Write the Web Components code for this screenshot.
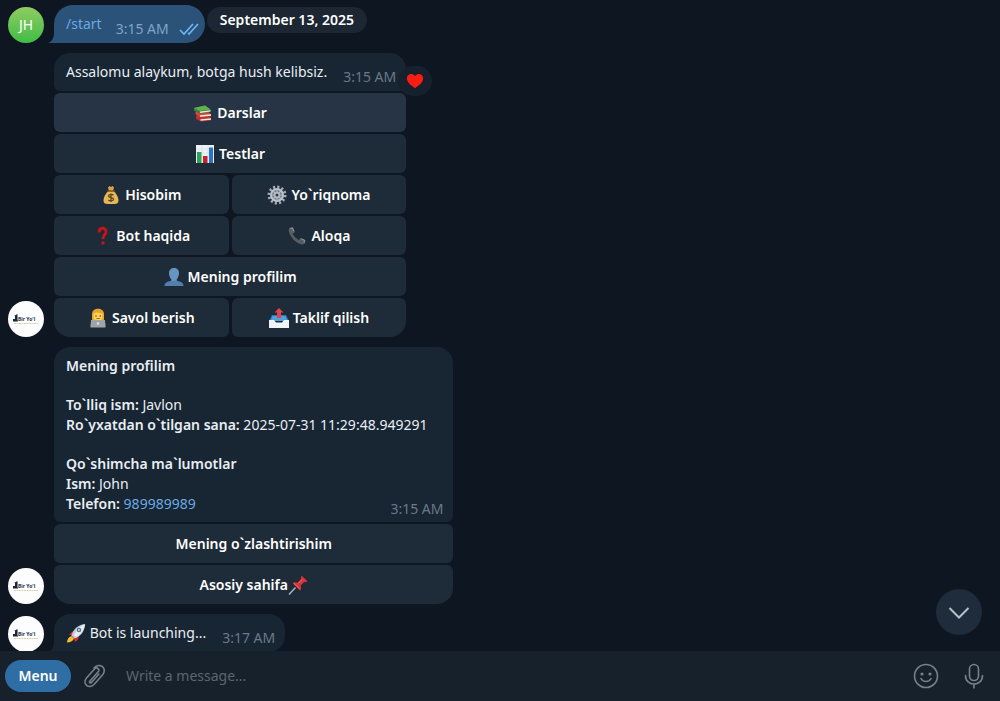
<!DOCTYPE html>
<html lang="uz">
<head>
<meta charset="utf-8">
<meta name="viewport" content="width=device-width, initial-scale=1">
<title>Bir Yo'l</title>
<style>
    html, body {
        height: 100%;
        margin: 0;
    }
    body {
        background: #0e1621;
        color: #e9eef3;
        font: 14px/20px "Noto Sans", "Open Sans", sans-serif;
        --bubble: #182533;
        --key: #1e2b38;
        --muted: #6b7987;
        --radius: 16px;
    }
    b { font-weight: 600; }
    a { color: #6aaae4; text-decoration: none; }
</style>
</head>
<body>
<chat-app>
    <chat-message>
        <user-avatar slot="avatar" name="JH"></user-avatar>
        <chat-bubble out tail time="3:15 AM"><a href="#start">/start</a></chat-bubble>
        <date-pill>September 13, 2025</date-pill>
    </chat-message>

    <chat-message>
        <user-avatar slot="avatar"></user-avatar>
        <key-board>
            <chat-bubble slot="bubble" keys time="3:15 AM">Assalomu alaykum, botga hush kelibsiz.<reaction-badge slot="reaction"></reaction-badge></chat-bubble>
            <key-button wide active icon="books">Darslar</key-button>
            <key-button wide icon="chart">Testlar</key-button>
            <key-button icon="money">Hisobim</key-button>
            <key-button icon="gear">Yo`riqnoma</key-button>
            <key-button icon="question">Bot haqida</key-button>
            <key-button icon="phone">Aloqa</key-button>
            <key-button wide icon="person">Mening profilim</key-button>
            <key-button first icon="worker">Savol berish</key-button>
            <key-button last icon="outbox">Taklif qilish</key-button>
        </key-board>
    </chat-message>

    <chat-message>
        <user-avatar slot="avatar"></user-avatar>
        <key-board>
            <chat-bubble slot="bubble" keys long time="3:15 AM">
                <text-group><b>Mening profilim</b></text-group>
                <text-group><b>To`lliq ism:</b> Javlon<br><b>Ro`yxatdan o`tilgan sana:</b> 2025-07-31 11:29:48.949291</text-group>
                <text-group><b>Qo`shimcha ma`lumotlar</b><br><b>Ism:</b> John<br><b>Telefon:</b> <a href="tel:989989989">989989989</a></text-group>
            </chat-bubble>
            <key-button wide>Mening o`zlashtirishim</key-button>
            <key-button wide first last after icon="pin">Asosiy sahifa</key-button>
        </key-board>
    </chat-message>

    <chat-message>
        <user-avatar slot="avatar"></user-avatar>
        <chat-bubble tail time="3:17 AM"><emoji-icon name="rocket"></emoji-icon> Bot is launching...</chat-bubble>
    </chat-message>

    <scroll-button slot="scroll"></scroll-button>
    <message-composer slot="composer"></message-composer>
</chat-app>

<script>
// 20x20 drawings
const emojis = {
    books: `
        <path d="m3 13 11-1 4 3v2.500L8 18.500 3 16z" fill="#b8322f"/>
        <path d="m7.500 16.200 10.500-1v1.600l-10.500 1z" fill="#f1e9dd"/>
        <path d="m2.500 8.500 11-.5 4.500 3v2.500L7 14.500l-4.500-3z" fill="#d2453c"/>
        <path d="m7 12.200 11-1v1.500L7 13.700z" fill="#f5eee2"/>
        <path d="M1 5 12 2.500l5.500 4V9L7 10.500 1 7.500z" fill="#35843a"/>
        <path d="M1 5 12 2.500l5.500 4L7 8z" fill="#62b04f"/>
        <path d="m7 8.600 10.500-1.400v1.300L7 9.900z" fill="#ece8d4"/>`,
    chart: `
        <path d="M1 1h18v18H1z" fill="#eef2f6"/>
        <path d="M1 5h18M1 9h18M1 13h18M7 1v18M13 1v18" stroke="#cdd8e2" stroke-width=".6"/>
        <path d="M2 8h4.500v11H2z" fill="#2aa653"/>
        <path d="M8 12h4.500v7H8z" fill="#c5202c"/>
        <path d="M14 3.500h4V19h-4z" fill="#2875c9"/>`,
    money: `
        <path d="M7 2.500 8.500 1l1.500 1 1.500-1L13 2.500 12 6H8z" fill="#d9a646"/>
        <path d="M7.500 6h5c2.500 2 5 6 5 9.500 0 2.500-1.500 3.500-4 3.500h-7c-2.500 0-4-1-4-3.500C2.500 12 5 8 7.500 6z" fill="#e3b75a"/>
        <path d="M7 6h6" stroke="#7e4e20" stroke-width="1.600" stroke-linecap="round"/>
        <path d="M12.500 10.200c-1-1-5-1.200-5 .8 0 2.200 5 1 5 3.200 0 2-4 2-5.200.6M10 8.500v8.500" fill="none" stroke="#5e451d" stroke-width="1.300"/>`,
    gear: `
        <circle cx="10" cy="10" r="8" fill="none" stroke="#a6aeb8" stroke-width="3" stroke-dasharray="2.100 2.088"/>
        <circle cx="10" cy="10" r="6" fill="#78828e" stroke="#bdc4cc" stroke-width="2"/>
        <path d="M10 4v12M4 10h12M6 6l8 8M14 6l-8 8" stroke="#aeb6bf" stroke-width="1.200"/>
        <circle cx="10" cy="10" r="3" fill="#b9c0c8"/>
        <circle cx="10" cy="10" r="1.500" fill="#303b47"/>`,
    question: `
        <path d="M7 6.500c0-5.500 7-5.500 7-1 0 3.500-3 3.500-3 7.500" fill="none" stroke="#c9141b" stroke-width="2.800"/>
        <circle cx="11" cy="17" r="1.700" fill="#c9141b"/>`,
    phone: `
        <path d="M3 1.500 6 1l2 5-2.200 1.800c1.200 2.700 3.200 4.800 6 6.200l2-2.200 4.700 2.200-.5 3.500c-2 2-6 1-10-2.500S-.5 4 3 1.500z" fill="#555c64"/>
        <path d="m3.500 2.500 2-.5 1.200 3.300M14.500 13l3 1.400-.4 2" fill="none" stroke="#939aa1"/>`,
    person: `
        <path d="M.5 19c0-3 2.500-4.500 6-5l1-1.500h5l1 1.500c3.500.5 6 2 6 5z" fill="#527fae"/>
        <path d="M5 6c0-3 2-5 5-5s5 2 5 5-2 8-5 8-5-5-5-8z" fill="#6795c2"/>`,
    worker: `
        <path d="M4 13V6c0-7 12-7 12 0v7z" fill="#e9a523"/>
        <path d="M5.500 6 8 4.500l6.500 1V9c0 5-9 5-9 0z" fill="#ffd35c"/>
        <circle cx="8" cy="8" r=".8" fill="#61421e"/><circle cx="12.300" cy="8" r=".8" fill="#61421e"/>
        <path d="M8.500 10.500h3.300" stroke="#9a6023"/>
        <path d="M2.500 19v-3c0-2 2-3 4-3h7c2 0 4 1 4 3v3z" fill="#4b7196"/>
        <path d="M3 12h14l.5 7.500h-15z" fill="#a0a3a7"/>
        <circle cx="10" cy="15.500" r="1.200" fill="#dddfe1"/>`,
    outbox: `
        <path d="M3 7h14l3 6H0z" fill="#2b79b9"/>
        <path d="M3.500 8h13l2 5h-17z" fill="#4f9fd8"/>
        <path d="M0 12h5l2 2.500h6l2-2.500h5v8H0z" fill="#eef3f7"/>
        <path d="M10 0 5.500 4.500H8V10h4V4.500h2.500z" fill="#e4424a"/>`,
    pin: `
        <path d="m7.500 12.500-6.500 7" stroke="#a9b6bf" stroke-width="1.500"/>
        <path d="M4.500 8c2-1.200 4-.8 5.200-.2L13 4c-.3-1 0-2.200.8-3.200l5.700 5.500c-1 .8-2.200 1-3.200.7L12.500 10.500c.8 1.500 1 3.500-.3 5.300z" fill="#d73338"/>
        <path d="m10 8.500 4-4M6 8.500l5.500 5" stroke="#f36e6c"/>`,
    rocket: `
        <path d="M3 12c3-4 5-4 7-4l3 4c0 3-1 5-4 7l-1-4-3-3z" fill="#d82d32"/>
        <path d="M5.500 13 8 15.500C7 18 4 19.500 1 19.500c.2-3 1.500-5.500 4.500-6.500z" fill="#f5bd2c"/>
        <path d="M5.500 12.500C7 7 11 2 19 1c0 7-4 12-10.500 14.500z" fill="#c3ced8"/>
        <path d="M8 12.500C10 8 13 4 19 1c-1 6-4.500 10-8.500 13z" fill="#e9eef3"/>
        <circle cx="13" cy="7" r="2.200" fill="#4e6b87"/><circle cx="13" cy="7" r="1.200" fill="#9fc3df"/>`,
    heart: `
        <path d="M10 18C4 14 1 11 1 7c0-5 6-6.500 9-2.500C13 .5 19 2 19 7c0 4-3 7-9 11z" fill="#fb1d12"/>`
};

class BaseElement extends HTMLElement {
    constructor() {
        super();
        this.attachShadow({ mode: "open" });
        this.shadowRoot.innerHTML = this.render();
    }
}

class EmojiIcon extends BaseElement {
    render() {
        return `
<style>
    :host { display: inline-block; width: 20px; height: 20px; vertical-align: bottom; }
    svg { display: block; width: 100%; height: 100%; }
</style>
<svg viewBox="0 0 20 20" aria-hidden="true">${emojis[this.getAttribute("name")]}</svg>`;
    }
}

class ChatApp extends BaseElement {
    render() {
        return `
<style>
    :host {
        display: grid;
        grid-template-rows: minmax(0, 1fr) auto;
        height: 100vh;
        overflow: hidden;
    }
    main {
        position: relative;
        min-height: 0;
        overflow: hidden;
    }
    .list {
        display: flex;
        flex-direction: column;
        gap: 10px;
        padding: 5px 8px 0;
    }
    .scroll {
        position: absolute;
        right: 18px;
        bottom: 16px;
    }
</style>
<main>
    <div class="list"><slot></slot></div>
    <div class="scroll"><slot name="scroll"></slot></div>
</main>
<slot name="composer"></slot>`;
    }
}

class ChatMessage extends BaseElement {
    render() {
        return `
<style>
    :host { display: flex; align-items: flex-end; gap: 10px; }
    .body { display: flex; align-items: flex-start; gap: 2px; min-width: 0; }
</style>
<slot name="avatar"></slot>
<div class="body"><slot></slot></div>`;
    }
}

class UserAvatar extends BaseElement {
    render() {
        const name = this.getAttribute("name");
        const logo = `
<svg viewBox="0 0 26 12" aria-hidden="true">
    <path d="M4.500 1v7H0V6h2V3H1z" fill="#17263f"/>
    <path d="M0 8h5" stroke="#17263f"/>
    <text x="5" y="8">Bir Yo'l</text>
    <path d="M1 10.500h24" stroke="#c9c6a2" stroke-width=".8" stroke-dasharray="2 .5"/>
</svg>`;
        return `
<style>
    :host {
        display: grid;
        place-items: center;
        flex: none;
        width: 36px;
        height: 36px;
        border-radius: 50%;
        background: #fdfdfd;
    }
    :host([name]) { background: linear-gradient(#90cc63, #3fbd45); color: #fff; }
    svg { width: 26px; height: 12px; }
    text { font: 700 5px "Noto Sans", sans-serif; fill: #23334d; }
</style>
${name ? `<span>${name}</span>` : logo}`;
    }
}

class ChatBubble extends BaseElement {
    render() {
        const checks = `
<svg width="20" height="14" viewBox="0 0 20 14" aria-label="Read">
    <path d="m1 8 4 4L14 2M9 11l1 1 9-10" fill="none" stroke="#6fb6f5" stroke-width="1.600"/>
</svg>`;
        return `
<style>
    :host {
        position: relative;
        display: flex;
        gap: 16px;
        box-sizing: border-box;
        min-height: 38px;
        padding: 9px 10px 9px 12px;
        border-radius: var(--radius);
        background: var(--bubble);
    }
    :host([out]) { --bubble: #2b5278; --muted: #7ea5cb; gap: 14px; padding-right: 6px; border-radius: 19px; }
    :host([tail]) { border-bottom-left-radius: 0; }
    :host([keys]) { border-radius: var(--radius) var(--radius) 6px 6px; }
    :host([long]) { gap: 0; padding-bottom: 8px; }
    .text { white-space: nowrap; }
    :host([long]) .text { display: grid; gap: 19px; padding-right: 16px; }
    .meta {
        display: flex;
        align-items: center;
        gap: 10px;
        align-self: flex-end;
        height: 10px;
        color: var(--muted);
        white-space: nowrap;
    }
    :host([long]) .meta { position: absolute; right: 10px; bottom: 8px; }
    .tail { display: none; position: absolute; left: -6px; bottom: 0; fill: var(--bubble); }
    :host([tail]) .tail { display: block; }
</style>
<svg class="tail" width="6" height="10" viewBox="0 0 6 10" aria-hidden="true"><path d="M6 0v10H0c3-1 6-4 6-10z"/></svg>
<div class="text"><slot></slot></div>
<div class="meta"><time>${this.getAttribute("time")}</time>${this.hasAttribute("out") ? checks : ""}</div>
<slot name="reaction"></slot>`;
    }
}

class TextGroup extends BaseElement {
    render() {
        return `
<style>
    :host { display: block; }
</style>
<slot></slot>`;
    }
}

class DatePill extends BaseElement {
    render() {
        return `
<style>
    :host {
        margin-top: 2px;
        padding: 3px 13px;
        border-radius: 13px;
        background: #1c2733;
        color: #fff;
        font-weight: 600;
        white-space: nowrap;
    }
</style>
<slot></slot>`;
    }
}

class ReactionBadge extends BaseElement {
    render() {
        return `
<style>
    :host { position: absolute; right: -26px; bottom: -5px; }
    button {
        display: grid;
        place-items: center;
        width: 34px;
        height: 30px;
        padding: 0;
        border: 0;
        border-radius: 15px;
        background: #17212d;
    }
    emoji-icon { width: 18px; height: 18px; }
</style>
<button aria-label="Heart"><emoji-icon name="heart"></emoji-icon></button>`;
    }
}

class KeyBoard extends BaseElement {
    render() {
        return `
<style>
    :host { display: grid; gap: 2px; }
    .keys { display: grid; grid-template-columns: 1fr 1fr; gap: 2px 3px; }
</style>
<slot name="bubble"></slot>
<div class="keys"><slot></slot></div>`;
    }
}

class KeyButton extends BaseElement {
    render() {
        const icon = this.getAttribute("icon");
        const emoji = icon ? `<emoji-icon name="${icon}"></emoji-icon>` : "";
        const after = this.hasAttribute("after");
        return `
<style>
    :host { display: block; --left: 6px; --right: 6px; }
    :host([wide]) { grid-column: span 2; }
    :host([first]) { --left: var(--radius); }
    :host([last]) { --right: var(--radius); }
    button {
        display: flex;
        align-items: center;
        justify-content: center;
        gap: 4px;
        width: 100%;
        height: 39px;
        padding: 0 8px;
        border: 0;
        border-radius: 6px 6px var(--right) var(--left);
        background: var(--key);
        color: #fff;
        font: inherit;
        font-weight: 600;
        white-space: nowrap;
        cursor: pointer;
    }
    :host([after]) button { gap: 0; }
    :host([active]) button, button:hover { background: #263445; }
</style>
<button>${after ? "" : emoji}<span><slot></slot></span>${after ? emoji : ""}</button>`;
    }
}

class ScrollButton extends BaseElement {
    render() {
        return `
<style>
    :host { display: block; }
    button {
        display: grid;
        place-items: center;
        width: 46px;
        height: 46px;
        padding: 0;
        border: 0;
        border-radius: 50%;
        background: #1e2c3c;
    }
</style>
<button aria-label="Scroll down">
    <svg width="22" height="14" viewBox="0 0 22 14"><path d="m1.500 3 9.500 9.500L20.500 3" fill="none" stroke="#b4c0cc" stroke-width="2"/></svg>
</button>`;
    }
}

class MessageComposer extends BaseElement {
    render() {
        return `
<style>
    form {
        display: flex;
        align-items: center;
        height: 50px;
        padding: 0 2px 0 5px;
        background: #17212b;
    }
    button {
        display: grid;
        place-items: center;
        flex: none;
        width: 48px;
        height: 32px;
        padding: 0;
        border: 0;
        background: none;
        color: #77818b;
        cursor: pointer;
    }
    .menu {
        width: 66px;
        border-radius: 16px;
        background: #2f6ea5;
        color: #fff;
        font: inherit;
        font-weight: 600;
    }
    input {
        flex: 1;
        min-width: 0;
        padding: 0 7px;
        border: 0;
        outline: 0;
        background: none;
        color: #fff;
        font: inherit;
    }
    input::placeholder { color: #5c6670; opacity: 1; }
    svg { fill: none; stroke: currentColor; stroke-width: 1.600; stroke-linecap: round; stroke-linejoin: round; }
</style>
<form>
    <button class="menu" type="button">Menu</button>
    <button type="button" aria-label="Attach">
        <svg width="24" height="26" viewBox="0 0 24 26"><path d="m7 18 8-9c2.500-2.500-1-5.500-3.300-3.200l-8 9c-5 6 2.300 12 7.500 6.500l8.300-9.300c5.500-7-3-13-8.500-7M7 18c-1 1-.3 2.600 1.500 1.500l7.500-8.500"/></svg>
    </button>
    <input type="text" aria-label="Write a message" placeholder="Write a message...">
    <button type="button" aria-label="Emoji">
        <svg width="26" height="26" viewBox="0 0 26 26"><circle cx="13" cy="13" r="11.500"/><path d="M8 15.500c2 4 8 4 10 0"/><circle cx="9" cy="11" r=".8" fill="currentColor"/><circle cx="17" cy="11" r=".8" fill="currentColor"/></svg>
    </button>
    <button type="button" aria-label="Record voice">
        <svg width="20" height="26" viewBox="0 0 20 26"><rect x="5.500" y="1.500" width="9" height="16" rx="4.500"/><path d="M1.500 12.500c0 11.500 17 11.500 17 0M10 21v4"/></svg>
    </button>
</form>`;
    }
}

window.customElements.define("emoji-icon", EmojiIcon);
window.customElements.define("user-avatar", UserAvatar);
window.customElements.define("text-group", TextGroup);
window.customElements.define("date-pill", DatePill);
window.customElements.define("reaction-badge", ReactionBadge);
window.customElements.define("chat-bubble", ChatBubble);
window.customElements.define("key-button", KeyButton);
window.customElements.define("key-board", KeyBoard);
window.customElements.define("chat-message", ChatMessage);
window.customElements.define("scroll-button", ScrollButton);
window.customElements.define("message-composer", MessageComposer);
window.customElements.define("chat-app", ChatApp);
</script>
</body>
</html>
